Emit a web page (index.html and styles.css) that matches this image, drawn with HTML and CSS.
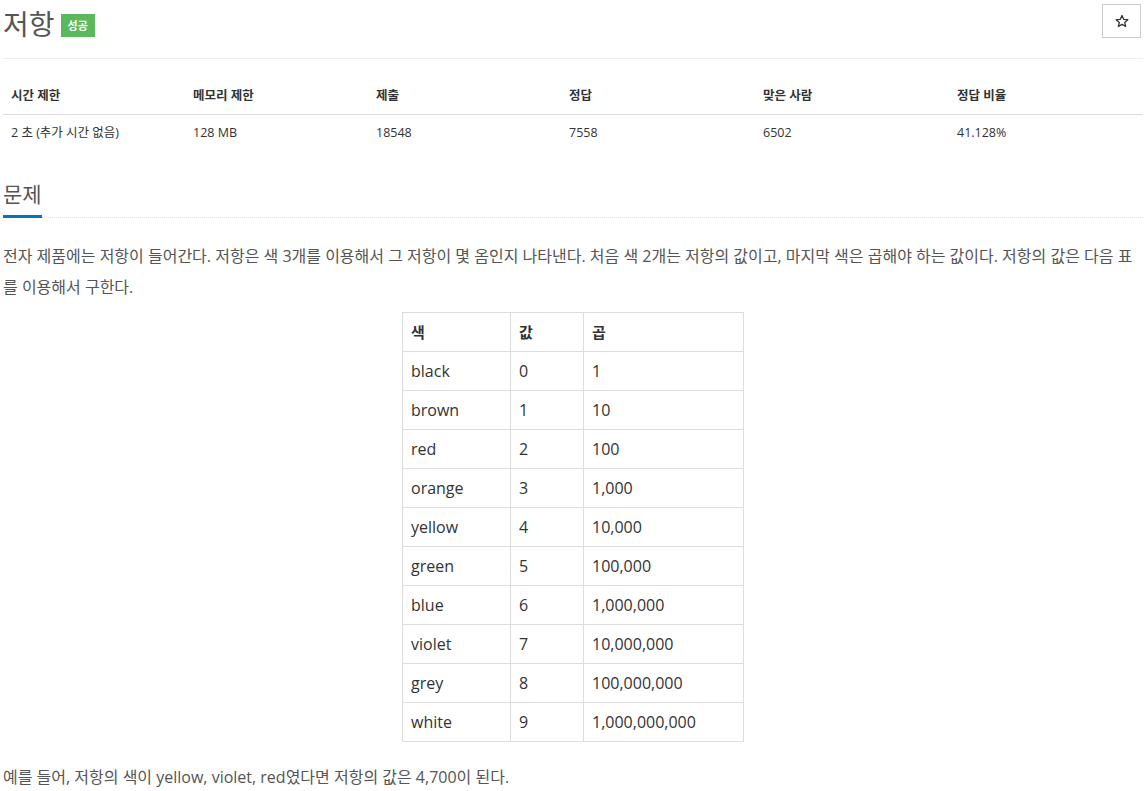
FILE: index.html
```html
<!DOCTYPE html>
<html lang="ko">
<head>
<meta charset="utf-8">
<link rel="stylesheet" href="styles.css">
</head>
<body>
<div class="page">
  <div class="page-header">
    <h1 class="title">저항 <span class="badge">성공</span></h1>
    <button class="star-btn" aria-label="star"><svg class="star-icon" width="14" height="14" viewBox="0 0 24 24"><path d="M12 2.5l2.9 6.6 7.1.6-5.4 4.7 1.6 7-6.2-3.7-6.2 3.7 1.6-7L2 9.7l7.1-.6z" fill="none" stroke="#333" stroke-width="2.2" stroke-linejoin="round"/></svg></button>
  </div>

  <table class="stats">
    <thead>
      <tr><th>시간 제한</th><th>메모리 제한</th><th>제출</th><th>정답</th><th>맞은 사람</th><th>정답 비율</th></tr>
    </thead>
    <tbody>
      <tr><td>2 초 (추가 시간 없음)</td><td>128 MB</td><td>18548</td><td>7558</td><td>6502</td><td>41.128%</td></tr>
    </tbody>
  </table>

  <section class="problem">
    <div class="headline"><h2>문제</h2></div>
    <div class="problem-text">
      <p>전자 제품에는 저항이 들어간다. 저항은 색 3개를 이용해서 그 저항이 몇 옴인지 나타낸다. 처음 색 2개는 저항의 값이고, 마지막 색은 곱해야 하는 값이다. 저항의 값은 다음 표를 이용해서 구한다.</p>
      <table class="colors">
        <thead><tr><th>색</th><th>값</th><th>곱</th></tr></thead>
        <tbody>
          <tr><td>black</td><td>0</td><td>1</td></tr>
          <tr><td>brown</td><td>1</td><td>10</td></tr>
          <tr><td>red</td><td>2</td><td>100</td></tr>
          <tr><td>orange</td><td>3</td><td>1,000</td></tr>
          <tr><td>yellow</td><td>4</td><td>10,000</td></tr>
          <tr><td>green</td><td>5</td><td>100,000</td></tr>
          <tr><td>blue</td><td>6</td><td>1,000,000</td></tr>
          <tr><td>violet</td><td>7</td><td>10,000,000</td></tr>
          <tr><td>grey</td><td>8</td><td>100,000,000</td></tr>
          <tr><td>white</td><td>9</td><td>1,000,000,000</td></tr>
        </tbody>
      </table>
      <p>예를 들어, 저항의 색이 yellow, violet, red였다면 저항의 값은 4,700이 된다.</p>
    </div>
  </section>
</div>
</body>
</html>
```

FILE: styles.css
```css
* { box-sizing: border-box; }
html, body { margin: 0; padding: 0; background: #fff; }
body {
  font-family: "Open Sans", "Noto Sans CJK KR", sans-serif;
  font-size: 13px;
  color: #333;
}
.page { padding: 0 3px; }

.page-header {
  display: flex;
  justify-content: space-between;
  align-items: flex-start;
  border-bottom: 1px solid #eee;
  height: 59px;
}
.title {
  margin: 4px 0 0 0;
  font-size: 28px;
  font-weight: 400;
  color: #555;
  line-height: 40px;
  display: flex;
  align-items: center;
  gap: 6px;
}
.badge {
  display: inline-block;
  background: #5cb85c;
  color: #fff;
  font-size: 11px;
  font-weight: 700;
  line-height: 23px;
  padding: 0 7px;
  margin-top: 3px;
}
.star-btn {
  margin: 4px 2px 0 0;
  width: 39px;
  height: 34px;
  border: 1px solid #ccc;
  background: #fff;
  padding: 0;
  display: flex;
  align-items: center;
  justify-content: center;
}
.star-icon { display: block; }

.stats {
  width: 100%;
  border-collapse: collapse;
  margin-top: 19px;
}
.stats th, .stats td {
  text-align: left;
  padding: 8px;
  line-height: 20px;
  font-size: 13px;
}
.stats th { font-weight: 700; font-size: 12.5px; border-bottom: 1px solid #ddd; }
.stats td { font-size: 12.5px; }
.stats th:nth-child(1) { width: 182px; }
.stats th:nth-child(2) { width: 183px; }
.stats th:nth-child(3) { width: 193px; }
.stats th:nth-child(4) { width: 194px; }
.stats th:nth-child(5) { width: 194px; }

.problem { margin-top: 28px; }
.headline {
  border-bottom: 1px dotted #ddd;
  display: flex;
}
.headline h2 {
  margin: 0;
  font-size: 21px;
  font-weight: 400;
  color: #555;
  line-height: 30px;
  padding-bottom: 6px;
  border-bottom: 3px solid #0076c0;
  margin-bottom: -1px;
}
.problem-text {
  font-size: 16px;
  line-height: 31px;
  color: #555;
  margin-top: 23px;
}
.problem-text p { margin: 0 0 9px 0; }
.colors {
  border-collapse: collapse;
  margin: 0 auto 20px auto;
  width: 342px;
  color: #333;
}
.colors th, .colors td {
  border: 1px solid #ddd;
  padding: 0 8px;
  height: 39px;
  line-height: 22px;
  text-align: left;
  font-size: 16px;
}
.colors th { font-weight: 700; font-size: 15px; }
.colors th:nth-child(1) { width: 108px; }
.colors th:nth-child(2) { width: 73px; }
```
